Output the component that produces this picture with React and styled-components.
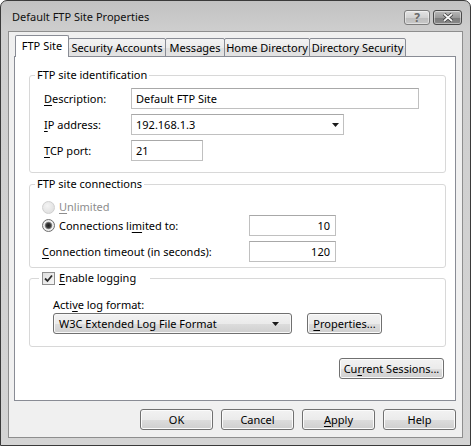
import React from 'react';
import styled, { createGlobalStyle } from 'styled-components';

const Global = createGlobalStyle`
  html, body { margin: 0; padding: 0; background: #ffffff; }
  body {
    font-family: "Noto Sans", "Open Sans", sans-serif;
    font-size: 11px;
    color: #000;
  }
  * { box-sizing: border-box; }
`;

const Window = styled.div`
  width: 471px;
  height: 446px;
  border: 1px solid #3a3a3a;
  border-radius: 7px 7px 0 0;
  background: linear-gradient(180deg, #c2c2c2 0px, #cecece 30px, #d4d4d4 100%);
  display: flex;
  flex-direction: column;
  padding: 0 7px 7px 7px;
`;

const TitleBar = styled.div`
  height: 30px;
  display: flex;
  align-items: flex-start;
  justify-content: space-between;
  padding-left: 4px;
`;

const Title = styled.div`
  margin-top: 8px;
  font-size: 11px;
  line-height: 16px;
  color: #101010;
`;

const Caption = styled.div`
  display: flex;
  gap: 3px;
  margin-top: 9px;
  margin-right: 1px;
`;

const CaptionButton = styled.div`
  width: ${p => p.$w}px;
  height: 15px;
  border: 1px solid ${p => (p.$dark ? '#4a4a4a' : '#7c7c7c')};
  border-radius: 3px;
  background: ${p =>
    p.$dark
      ? 'linear-gradient(180deg, #b8b8b8 0%, #9a9a9a 50%, #7a7a7a 51%, #8a8a8a 100%)'
      : 'linear-gradient(180deg, #e4e4e4 0%, #d2d2d2 50%, #bdbdbd 51%, #c8c8c8 100%)'};
  box-shadow: inset 0 0 0 1px rgba(255, 255, 255, 0.45);
  display: flex;
  align-items: center;
  justify-content: center;
  font-size: 12px;
  font-weight: bold;
  color: #6a6a6a;
  line-height: 1;
`;

const Client = styled.div`
  flex: 1;
  border: 1px solid #8e8e8e;
  background: #f0f0f0;
  display: flex;
  flex-direction: column;
  padding: 3px 6px 0 5px;
`;

const TabStrip = styled.div`
  display: flex;
  align-items: flex-end;
  height: 22px;
  padding-left: 1px;
  margin-bottom: -1px;
`;

const Tab = styled.div`
  position: relative;
  z-index: ${p => (p.$active ? 2 : 1)};
  width: ${p => p.$w}px;
  height: ${p => (p.$active ? 22 : 19)}px;
  margin-left: ${p => (p.$first ? 0 : -1)}px;
  border: 1px solid #898c95;
  border-bottom: ${p => (p.$active ? 'none' : '1px solid #898c95')};
  border-radius: 2px 2px 0 0;
  background: ${p =>
    p.$active ? '#ffffff' : 'linear-gradient(180deg, #f3f3f3 0%, #ebebeb 50%, #dedede 51%, #e3e3e3 100%)'};
  display: flex;
  align-items: ${p => (p.$active ? 'flex-start' : 'center')};
  justify-content: center;
  padding-top: ${p => (p.$active ? 2 : 0)}px;
  line-height: 16px;
  white-space: nowrap;
`;

const Panel = styled.div`
  position: relative;
  z-index: 1;
  height: 345px;
  border: 1px solid #898c95;
  background: #ffffff;
  padding: 10px 9px 0 14px;
  display: flex;
  flex-direction: column;
`;

const Group = styled.fieldset`
  margin: ${p => p.$mt || 0}px 0 0 0;
  padding: 0;
  border: 1px solid #d8d8d8;
  border-radius: 3px;
  min-width: 0;
`;

const Legend = styled.legend`
  margin-left: ${p => p.$ml}px;
  padding: 0 ${p => p.$pr || 2}px 0 ${p => p.$pl || 2}px;
  line-height: 16px;
  height: 16px;
  display: flex;
  align-items: center;
  gap: 4px;
`;

const FormGrid = styled.div`
  display: grid;
  grid-template-columns: ${p => p.$cols};
  row-gap: ${p => p.$gap}px;
  align-items: center;
  padding: ${p => p.$pad};
`;

const Label = styled.div`
  line-height: 16px;
  height: 16px;
  white-space: nowrap;
  color: ${p => (p.$disabled ? '#8d8d8d' : '#000')};
  display: flex;
  align-items: center;
  gap: 4px;
  margin-bottom: ${p => p.$mb || 0}px;
`;

const Key = styled.span`
  text-decoration: underline;
  text-underline-offset: 2px;
`;

const TextBox = styled.div`
  width: ${p => p.$w}px;
  height: 21px;
  border: 1px solid #c0c0c0;
  border-top-color: #a8a8a8;
  background: #fff;
  display: flex;
  align-items: center;
  justify-content: ${p => (p.$right ? 'flex-end' : 'space-between')};
  padding: 0 ${p => (p.$right ? 5 : 4)}px 0 4px;
  line-height: 16px;
  white-space: nowrap;
`;

const Arrow = () => (
  <svg width="7" height="4" viewBox="0 0 7 4">
    <path d="M0 0 H7 L3.5 4 Z" fill="#1a1a1a" />
  </svg>
);

const DropList = styled.div`
  width: ${p => p.$w}px;
  height: 21px;
  border: 1px solid #707070;
  border-radius: 3px;
  background: linear-gradient(180deg, #f2f2f2 0%, #ebebeb 50%, #dddddd 51%, #cfcfcf 100%);
  box-shadow: inset 0 0 0 1px #f8f8f8;
  display: flex;
  align-items: center;
  justify-content: space-between;
  padding: 0 12px 0 5px;
  line-height: 16px;
  white-space: nowrap;
`;

const Button = styled.div`
  width: ${p => p.$w}px;
  height: 21px;
  border: 1px solid #707070;
  border-radius: 3px;
  background: linear-gradient(180deg, #f2f2f2 0%, #ebebeb 50%, #dddddd 51%, #cfcfcf 100%);
  box-shadow: inset 0 0 0 1px #fbfbfb;
  display: flex;
  align-items: center;
  justify-content: center;
  line-height: 16px;
  white-space: nowrap;
`;

const Radio = styled.span`
  width: 13px;
  height: 13px;
  flex: none;
  border-radius: 50%;
  border: 1px solid ${p => (p.$disabled ? '#cfcfcf' : '#6f6f6f')};
  background: ${p =>
    p.$disabled
      ? 'radial-gradient(circle at 40% 35%, #f4f4f4 0%, #e2e2e2 70%)'
      : 'radial-gradient(circle, #1d1d1d 0, #3c3c3c 2.2px, #8a8a8a 3.4px, #f2f2f2 4.2px, #dcdcdc 100%)'};
`;

const CheckBox = styled.span`
  width: 13px;
  height: 13px;
  flex: none;
  border: 1px solid #8f8f8f;
  background: linear-gradient(135deg, #dedede 0%, #f7f7f7 100%);
  display: flex;
  align-items: center;
  justify-content: center;
`;

const Check = () => (
  <svg width="9" height="9" viewBox="0 0 9 9">
    <path d="M1 4.5 L3.5 7 L8 1.5" fill="none" stroke="#2b2b2b" strokeWidth="1.8" />
  </svg>
);

const LogBody = styled.div`
  padding: 11px 0 12px 23px;
  display: flex;
  flex-direction: column;
  gap: 0;
`;

const LogRow = styled.div`
  display: flex;
  align-items: center;
  gap: 15px;
`;

const RightRow = styled.div`
  display: flex;
  justify-content: flex-end;
  margin-top: ${p => p.$mt}px;
  padding-right: ${p => p.$pr || 0}px;
  gap: ${p => p.$gap || 0}px;
`;

const tabs = [
  { t: 'FTP Site', w: 54 },
  { t: 'Security Accounts', w: 98 },
  { t: 'Messages', w: 60 },
  { t: 'Home Directory', w: 86 },
  { t: 'Directory Security', w: 97 },
];

export default function App() {
  return (
    <>
      <Global />
      <Window>
        <TitleBar>
          <Title>Default FTP Site Properties</Title>
          <Caption>
            <CaptionButton $w={26}>?</CaptionButton>
            <CaptionButton $w={29} $dark>
              <svg width="12" height="9" viewBox="0 0 12 9">
                <path d="M2 1 L10 8 M10 1 L2 8" stroke="#3a3a3a" strokeWidth="3.4" />
                <path d="M2 1 L10 8 M10 1 L2 8" stroke="#f4f4f4" strokeWidth="1.8" />
              </svg>
            </CaptionButton>
          </Caption>
        </TitleBar>
        <Client>
          <TabStrip>
            {tabs.map((tb, i) => (
              <Tab key={tb.t} $w={tb.w} $active={i === 0} $first={i === 0}>
                {tb.t}
              </Tab>
            ))}
          </TabStrip>
          <Panel>
            <Group>
              <Legend $ml={5}>FTP site identification</Legend>
              <FormGrid $cols="87px auto" $gap={5} $pad="5px 0 11px 14px">
                <Label><span><Key>D</Key>escription:</span></Label>
                <TextBox $w={288}>Default FTP Site</TextBox>
                <Label><span><Key>I</Key>P address:</span></Label>
                <TextBox $w={213}>
                  <span>192.168.1.3</span>
                  <Arrow />
                </TextBox>
                <Label><span><Key>T</Key>CP port:</span></Label>
                <TextBox $w={72}>21</TextBox>
              </FormGrid>
            </Group>
            <Group $mt={3}>
              <Legend $ml={5}>FTP site connections</Legend>
              <FormGrid $cols="207px auto" $gap={5} $pad="7px 0 5px 12px">
                <Label $disabled $mb={-5}>
                  <Radio $disabled />
                  <span><Key>U</Key>nlimited</span>
                </Label>
                <span />
                <Label>
                  <Radio />
                  <span>Connections li<Key>m</Key>ited to:</span>
                </Label>
                <TextBox $w={87} $right>10</TextBox>
                <Label><span><Key>C</Key>onnection timeout (in seconds):</span></Label>
                <TextBox $w={87} $right>120</TextBox>
              </FormGrid>
            </Group>
            <Group $mt={2}>
              <Legend $ml={9} $pl={3} $pr={14}>
                <CheckBox><Check /></CheckBox>
                <span><Key>E</Key>nable logging</span>
              </Legend>
              <LogBody>
                <Label><span>Acti<Key>v</Key>e log format:</span></Label>
                <LogRow>
                  <DropList $w={239}>
                    <span>W3C Extended Log File Format</span>
                    <Arrow />
                  </DropList>
                  <Button $w={75}><span><Key>P</Key>roperties...</span></Button>
                </LogRow>
              </LogBody>
            </Group>
            <RightRow $mt={11} $pr={2}>
              <Button $w={105}><span>Cu<Key>r</Key>rent Sessions...</span></Button>
            </RightRow>
          </Panel>
          <RightRow $mt={8} $gap={8}>
            <Button $w={73}>OK</Button>
            <Button $w={73}>Cancel</Button>
            <Button $w={73}><span><Key>A</Key>pply</span></Button>
            <Button $w={73}>Help</Button>
          </RightRow>
        </Client>
      </Window>
    </>
  );
}
